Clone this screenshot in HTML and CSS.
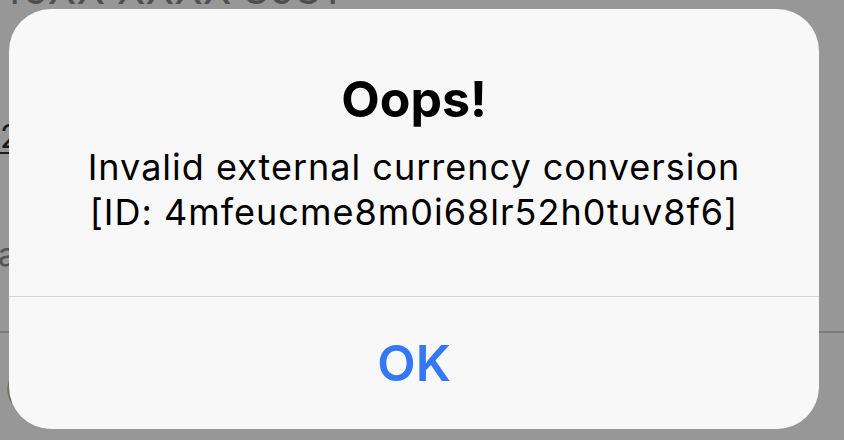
FILE: index.html
```html
<!DOCTYPE html>
<html>
<head>
<meta charset="utf-8">
<link rel="stylesheet" href="styles.css">
</head>
<body>
<div class="screen">
  <div class="page">
    <div class="card-number">49XX XXXX 3931</div>
    <div class="amount">2 Sample amount</div>
    <div class="label">account details</div>
    <div class="divider"></div>
    <div class="note">(optional)</div>
  </div>
  <div class="overlay">
    <div class="alert">
      <div class="alert-body">
        <div class="alert-title">Oops!</div>
        <div class="alert-message">Invalid external currency conversion<br>[ID: 4mfeucme8m0i68lr52h0tuv8f6]</div>
      </div>
      <div class="alert-actions">
        <div class="alert-button">OK</div>
      </div>
    </div>
  </div>
</div>
</body>
</html>
```
FILE: styles.css
```css
html, body {
  margin: 0;
  padding: 0;
}
body {
  width: 844px;
  height: 440px;
  overflow: hidden;
  background: #979797;
  font-family: Inter, "Liberation Sans", sans-serif;
}
.screen {
  position: relative;
  width: 844px;
  height: 440px;
  overflow: hidden;
}
.page {
  display: flex;
  flex-direction: column;
}
.card-number {
  font-size: 42px;
  line-height: 44px;
  margin-top: -33px;
  margin-left: -4px;
  color: #4e4e4e;
  white-space: nowrap;
}
.amount {
  margin-top: 111px;
  font-size: 32px;
  line-height: 30px;
  color: #1c1c1c;
  border-bottom: 2px solid #1c1c1c;
  width: 300px;
  white-space: nowrap;
}
.label {
  margin-top: 86px;
  font-size: 32px;
  line-height: 30px;
  color: #555;
  margin-left: -2px;
  white-space: nowrap;
}
.divider {
  margin-top: 61px;
  height: 2px;
  background: #7c7c7c;
}
.note {
  margin-top: 40px;
  font-size: 32px;
  line-height: 30px;
  color: #6a6a6a;
  margin-left: 4px;
  white-space: nowrap;
}
.overlay {
  position: absolute;
  inset: 0;
}
.alert {
  position: absolute;
  left: 9px;
  top: 9px;
  width: 810px;
  height: 420px;
  border-radius: 42px;
  background: #f8f8f8;
  display: flex;
  flex-direction: column;
  overflow: hidden;
}
.alert-body {
  height: 288px;
  box-sizing: border-box;
  padding-top: 70px;
  text-align: center;
  border-bottom: 1px solid #d6d6d6;
  color: #000;
}
.alert-title {
  font-size: 50px;
  font-weight: 700;
  line-height: 40px;
}
.alert-message {
  margin-top: 26px;
  font-size: 36px;
  letter-spacing: 1px;
  line-height: 45px;
}
.alert-actions {
  flex: 1;
  display: flex;
  align-items: center;
  justify-content: center;
}
.alert-button {
  font-size: 50px;
  font-weight: 600;
  color: #3478f6;
  line-height: 50px;
}
```
